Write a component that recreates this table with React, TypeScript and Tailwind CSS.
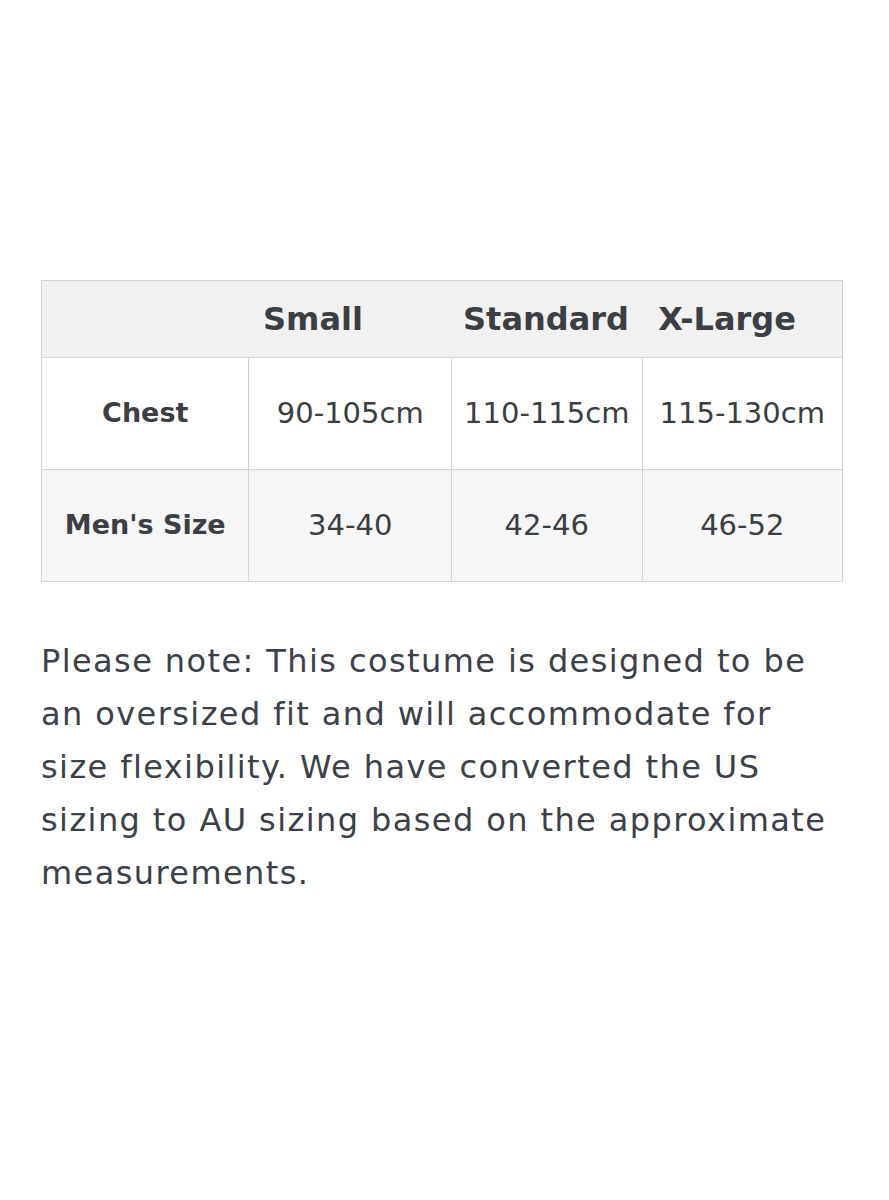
const rows = [
  { label: "Chest", values: ["90-105cm", "110-115cm", "115-130cm"], bg: "bg-white" },
  { label: "Men's Size", values: ["34-40", "42-46", "46-52"], bg: "bg-[#f6f6f6]" },
];

const cols = ["w-[207px]", "w-[203px]", "w-[191px]", "w-[201px]"];

export default function App() {
  return (
    <div className="min-h-[1200px] bg-white pt-[280px] pl-[41px] font-['DejaVu_Sans',sans-serif] text-[#3a3d42]">
      <div className="w-[802px] border border-[#d4d4d4]">
        {/* header */}
        <div className="flex h-[76px] items-center bg-[#f1f1f1] text-[32px] font-bold text-[#3b3e43]">
          <span className="ml-[181px] w-[180px] text-center">Small</span>
          <span className="ml-[53px] w-[180px] text-center">Standard</span>
          <span className="ml-[1px] w-[180px] text-center">X-Large</span>
        </div>
        {rows.map((row) => (
          <div key={row.label} className={`flex h-[112px] border-t border-[#d4d4d4] ${row.bg}`}>
            <div className={`${cols[0]} flex items-center justify-center text-[27px] font-bold text-[#3b3e43]`}>
              {row.label}
            </div>
            {row.values.map((v, i) => (
              <div
                key={v}
                className={`${cols[i + 1]} flex items-center justify-center border-l border-[#d4d4d4] text-[29px]`}
              >
                {v}
              </div>
            ))}
          </div>
        ))}
      </div>
      <p className="mt-[53px] text-[32px] leading-[53px] tracking-[0.044em] text-[#3c4049]">
        Please note: This costume is designed to be
        <br />
        an oversized fit and will accommodate for
        <br />
        size flexibility. We have converted the US
        <br />
        sizing to AU sizing based on the approximate
        <br />
        measurements.
      </p>
    </div>
  );
}
